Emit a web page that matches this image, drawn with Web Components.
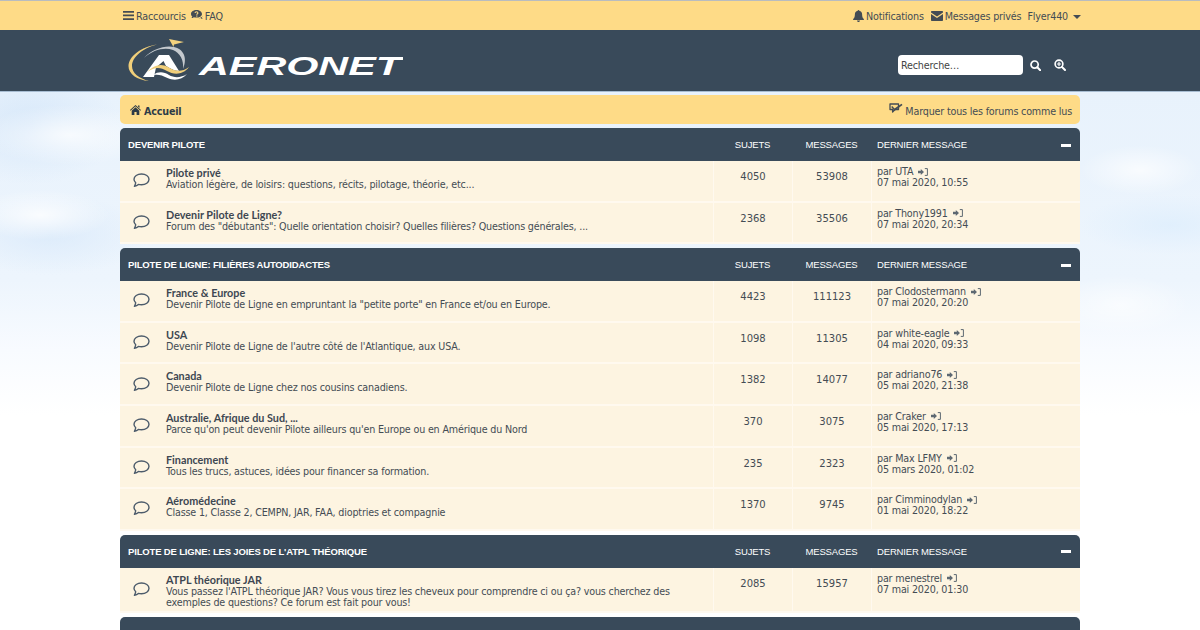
<!DOCTYPE html>
<html lang="fr">
<head>
<meta charset="utf-8">
<title>Aeronet</title>
<style>
  html, body { margin: 0; height: 630px; overflow: hidden; }
  body {
    font-family: "DejaVu Sans", sans-serif;
    color: #444c54;
    background:
      radial-gradient(ellipse 90px 30px at 70px 135px, rgba(255,255,255,.75), transparent),
      radial-gradient(ellipse 70px 25px at 40px 215px, rgba(255,255,255,.8), transparent),
      radial-gradient(ellipse 60px 25px at 1140px 170px, rgba(255,255,255,.7), transparent),
      radial-gradient(ellipse 70px 30px at 1120px 305px, rgba(255,255,255,.6), transparent),
      radial-gradient(ellipse 90px 60px at 30px 125px, rgba(205,226,248,.6), transparent),
      radial-gradient(ellipse 100px 40px at 50px 235px, rgba(215,232,250,.7), transparent),
      radial-gradient(ellipse 90px 30px at 1170px 225px, rgba(222,238,253,.8), transparent),
      linear-gradient(#e8f2fc 92px, #edf5fd 280px, #f8fbff 350px, #fff 415px);
  }
</style>
</head>
<body>
<aero-top></aero-top>
<aero-head></aero-head>
<aero-wrap>
  <aero-crumb></aero-crumb>
  <aero-cat title="DEVENIR PILOTE">
    <aero-row name="Pilote privé" desc="Aviation légère, de loisirs: questions, récits, pilotage, théorie, etc..." s="4050" m="53908" by="UTA" date="07 mai 2020, 10:55"></aero-row>
    <aero-row name="Devenir Pilote de Ligne?" desc="Forum des &quot;débutants&quot;: Quelle orientation choisir? Quelles filières? Questions générales, ..." s="2368" m="35506" by="Thony1991" date="07 mai 2020, 20:34"></aero-row>
  </aero-cat>
  <aero-cat title="PILOTE DE LIGNE: FILIÈRES AUTODIDACTES">
    <aero-row name="France &amp; Europe" desc="Devenir Pilote de Ligne en empruntant la &quot;petite porte&quot; en France et/ou en Europe." s="4423" m="111123" by="Clodostermann" date="07 mai 2020, 20:20"></aero-row>
    <aero-row name="USA" desc="Devenir Pilote de Ligne de l'autre côté de l'Atlantique, aux USA." s="1098" m="11305" by="white-eagle" date="04 mai 2020, 09:33"></aero-row>
    <aero-row name="Canada" desc="Devenir Pilote de Ligne chez nos cousins canadiens." s="1382" m="14077" by="adriano76" date="05 mai 2020, 21:38"></aero-row>
    <aero-row name="Australie, Afrique du Sud, ..." desc="Parce qu'on peut devenir Pilote ailleurs qu'en Europe ou en Amérique du Nord" s="370" m="3075" by="Craker" date="05 mai 2020, 17:13"></aero-row>
    <aero-row name="Financement" desc="Tous les trucs, astuces, idées pour financer sa formation." s="235" m="2323" by="Max LFMY" date="05 mars 2020, 01:02"></aero-row>
    <aero-row name="Aéromédecine" desc="Classe 1, Classe 2, CEMPN, JAR, FAA, dioptries et compagnie" s="1370" m="9745" by="Cimminodylan" date="01 mai 2020, 18:22"></aero-row>
  </aero-cat>
  <aero-cat title="PILOTE DE LIGNE: LES JOIES DE L'ATPL THÉORIQUE">
    <aero-row name="ATPL théorique JAR" desc="Vous passez l'ATPL théorique JAR? Vous vous tirez les cheveux pour comprendre ci ou ça? vous cherchez des exemples de questions? Ce forum est fait pour vous!" s="2085" m="15957" by="menestrel" date="07 mai 2020, 01:30"></aero-row>
  </aero-cat>
  <aero-cat></aero-cat>
</aero-wrap>

<script>
const ink = "#444c54";
const smallText = "font-size: 9.6px; letter-spacing: -.18px;";

const icons = {
  bars: `<svg width="11" height="9" viewBox="0 0 11 9"><path d="M0 0h11v1.700H0zM0 3.600h11v1.700H0zM0 7.200h11v1.700H0z" fill="currentColor"/></svg>`,
  faq: `<svg width="12" height="11" viewBox="0 0 12 11"><path d="M5.500 0C2.500 0 0 1.700 0 3.900c0 1 .5 1.900 1.300 2.600-.2.700-.6 1.200-1 1.600 1 0 1.900-.4 2.500-.9.800.3 1.700.4 2.700.4 3 0 5.500-1.600 5.500-3.700S8.500 0 5.500 0z" fill="currentColor"/><path d="M4 3c.1-.8.700-1.200 1.500-1.200S6.900 2.300 6.900 3c0 .9-1.100 1-1.100 1.800" fill="none" stroke="#fedb87" stroke-width="1.100"/><rect x="5.200" y="5.500" width="1.200" height="1.100" fill="#fedb87"/><path d="M7.500 8.200c.9.100 1.700 0 2.200-.3.500.5 1.200.9 2 1-.4-.5-.7-1-.8-1.500.4-.5.700-.9.900-1.500-1 1.400-2.500 2-4.300 2.300z" fill="currentColor"/></svg>`,
  bell: `<svg width="11" height="12" viewBox="0 0 11 12"><path d="M5.500 0c.5 0 .8.300.8.800 1.800.3 2.800 1.700 2.800 3.500 0 3 .7 3.700 1.800 4.900v.7H.1v-.7c1.100-1.200 1.800-1.900 1.800-4.900 0-1.800 1-3.200 2.800-3.500 0-.5.300-.8.800-.8zM4 10.500h3c0 .9-.7 1.500-1.500 1.500S4 11.400 4 10.500z" fill="currentColor"/></svg>`,
  mail: `<svg width="12" height="10" viewBox="0 0 12 10"><path d="M1 0h10c.6 0 1 .4 1 1v.5L6 5.600 0 1.500V1c0-.6.400-1 1-1zM0 3l6 4.100L12 3v6c0 .6-.4 1-1 1H1c-.6 0-1-.4-1-1z" fill="currentColor"/></svg>`,
  home: `<svg width="11" height="10" viewBox="0 0 11 10"><path d="M5.500 0L11 5l-.6.700-4.900-4.400L.6 5.700 0 5zM8 .6h1.500v2.300L8 1.600zM5.500 2.300l3.800 3.400V10H6.600V7H4.400v3H1.700V5.700z" fill="currentColor"/></svg>`,
  check: `<svg width="14" height="13" viewBox="0 0 14 13"><path d="M1 1h8.500v5.500H6L3.600 9V6.500H1z" fill="none" stroke="currentColor" stroke-width="1.300" stroke-linejoin="round"/><path d="M3.200 3l2.300 2.500L12.500.8l1 1.100-8 6L2.200 4z" fill="currentColor"/></svg>`,
  search: `<svg width="11" height="11" viewBox="0 0 11 11"><circle cx="4.600" cy="4.600" r="3.600" fill="none" stroke="currentColor" stroke-width="1.700"/><path d="M7.300 7.300L10.200 10.200" stroke="currentColor" stroke-width="2" stroke-linecap="round"/></svg>`,
  adv: `<svg width="12" height="12" viewBox="0 0 12 12"><circle cx="5" cy="5" r="3.900" fill="none" stroke="currentColor" stroke-width="1.600"/><path d="M8 8l3 3" stroke="currentColor" stroke-width="2" stroke-linecap="round"/><path d="M5 2.800v4.400M2.800 5h4.400" stroke="currentColor" stroke-width="1.200"/></svg>`,
  bubble: `<svg width="17" height="15" viewBox="0 0 17 15"><path d="M8.500 1C4.300 1 1 3.300 1 6.300c0 1.400.7 2.500 1.700 3.400-.1 1.100-.7 2.300-1.300 3.600 1.500-.3 3-1 4-1.900 1 .3 2 .4 3.100.4 4.200 0 7.500-2.400 7.500-5.500S12.700 1 8.500 1z" fill="none" stroke="#4c5b6b" stroke-width="1.400" stroke-linejoin="round"/></svg>`,
  goto: `<svg width="10" height="8" viewBox="0 0 10 8"><path d="M0 2.800h2.800V.9L6 4 2.800 7.100V5.200H0z" fill="#5d6872"/><path d="M6.800 .6H9.400v6.800H6.800" fill="none" stroke="#5d6872" stroke-width="1"/></svg>`
};

class AeroTop extends HTMLElement {
  constructor() {
    super();
    this.attachShadow({ mode: "open" });
    this.shadowRoot.innerHTML = `
    <style>
      :host { display: block; height: 29px; background: #fedb87; border-top: 1px solid #b9bcbf; color: ${ink}; ${smallText} }
      .in { width: 960px; margin: 0 auto; height: 100%; display: flex; justify-content: space-between; align-items: center; padding: 2px 0 0 3px; box-sizing: border-box; }
      .side { display: flex; align-items: center; }
      .it { display: flex; align-items: center; gap: 2px; }
      svg { display: block; margin-top: -2px; }
      .caret { width: 0; height: 0; border: 4px solid transparent; border-top: 4.5px solid currentColor; border-bottom: 0; margin-left: 3px; }
    </style>
    <div class="in">
      <div class="side" style="gap:5px">
        <span class="it">${icons.bars}Raccourcis</span>
        <span class="it">${icons.faq}FAQ</span>
      </div>
      <div class="side" style="gap:6px;margin-right:-1px">
        <span class="it" style="margin-right:1px">${icons.bell}Notifications</span>
        <span class="it">${icons.mail}Messages privés</span>
        <span class="it">Flyer440<i class="caret"></i></span>
      </div>
    </div>`;
  }
}

class AeroHead extends HTMLElement {
  constructor() {
    super();
    this.attachShadow({ mode: "open" });
    this.shadowRoot.innerHTML = `
    <style>
      :host { display: block; background: #394a5a; border-bottom: 1px solid #a8bdd2; height: 61px; }
      .in { width: 960px; margin: 0 auto; height: 100%; display: flex; justify-content: space-between; align-items: center; }
      .logo { margin-left: 7px; display: block; }
      .tools { display: flex; align-items: center; color: #fff; margin: 9px 14px 0 0; }
      .field { width: 125px; height: 20px; background: #fff; border-radius: 4px; ${smallText} line-height: 21px; padding-left: 3px; box-sizing: border-box; color: #444; margin-right: 7px; }
      .tools svg { display: block; }
    </style>
    <div class="in">
      <svg class="logo" width="276" height="54" viewBox="0 0 276 54">
        <path d="M30 10.500C14 13 2 22 1.500 32 1.500 40 10 46 22 47 12 44.500 5 39 5 32 5 23 16 14 30 10.500z" fill="#f1cf7a"/>
        <path d="M17 24C25 15 38 11 47 13c9 2 14 10 9 22 1-9-3-16-10-19-9-3-20 0-29 8z" fill="#fff" opacity=".7"/>
        <path d="M42 5l15 3-10 2.500-.5 2.500-2-3.500z" fill="#f3d27e"/>
        <path d="M32 21h10l10 16c-5 0-9-3-13-5l-2.500-5-7.500 6.500L27 43H16z" fill="#fff"/>
        <path d="M20 38c7-7 14-9 21-5 6 4 13 6 21 0-6 8-15 8-22 4-7-4-12-4-20 1z" fill="#f1cf7a"/>
        <path d="M26 41c6-4 11-3 16 0 5 3 12 3 18-1-5 6-13 7-19.500 4-5.500-3-9.500-4-14.500-3z" fill="#fff"/>
        <text x="72" y="40.500" font-family="Liberation Sans, sans-serif" font-weight="700" font-style="italic" font-size="25" fill="#fff" textLength="202" lengthAdjust="spacingAndGlyphs">AERONET</text>
      </svg>
      <div class="tools">
        <div class="field">Recherche…</div>
        <span style="margin:1px 13px 0 0">${icons.search}</span>
        <span style="margin-top:-1px">${icons.adv}</span>
      </div>
    </div>`;
  }
}

class AeroWrap extends HTMLElement {
  constructor() {
    super();
    this.attachShadow({ mode: "open" });
    this.shadowRoot.innerHTML = `
    <style>
      :host { display: flex; flex-direction: column; gap: 4px; width: 960px; margin: 3px auto 0; }
    </style>
    <slot></slot>`;
  }
}

class AeroCrumb extends HTMLElement {
  constructor() {
    super();
    this.attachShadow({ mode: "open" });
    this.shadowRoot.innerHTML = `
    <style>
      :host { display: flex; justify-content: space-between; align-items: center; height: 29px; background: #fedb87; border-radius: 5px; padding: 3px 8px 0 10px; color: ${ink}; ${smallText} box-sizing: border-box; }
      .l { display: flex; align-items: center; gap: 3px; font-weight: 700; color: #2e3b47; }
      .r { display: flex; align-items: center; gap: 2px; }
      svg { display: block; margin-top: -3px; }
    </style>
    <span class="l">${icons.home}Accueil</span>
    <span class="r">${icons.check}Marquer tous les forums comme lus</span>`;
  }
}

class AeroCat extends HTMLElement {
  constructor() {
    super();
    this.attachShadow({ mode: "open" });
    const title = this.getAttribute("title") || "";
    const cols = title ? `<span class="c s">SUJETS</span><span class="c m">MESSAGES</span><span class="c d">DERNIER MESSAGE</span><i class="minus"></i>` : "";
    this.shadowRoot.innerHTML = `
    <style>
      :host { display: block; }
      .bar { position: relative; display: flex; align-items: center; height: 33px; box-sizing: border-box; background: #394a5a; border-radius: 5px 5px 0 0; color: #fff; font: 9.5px "Liberation Sans", sans-serif; letter-spacing: -.16px; }
      .t { flex: 1; padding-left: 8px; font-weight: 700; min-width: 0; }
      .c { text-align: center; }
      .s, .m { width: 79px; }
      .d { width: 209px; padding-left: 6px; box-sizing: border-box; text-align: left; }
      .minus { position: absolute; right: 9px; top: 15.500px; width: 10px; height: 3px; background: #fff; }
      .body { display: flex; flex-direction: column; }
    </style>
    <div class="bar"><span class="t">${title}</span>${cols}</div>
    <div class="body"><slot></slot></div>`;
  }
}

class AeroRow extends HTMLElement {
  constructor() {
    super();
    this.attachShadow({ mode: "open" });
    const a = n => this.getAttribute(n) || "";
    this.shadowRoot.innerHTML = `
    <style>
      :host { display: grid; grid-template-columns: 593px 79px 79px 209px; background: #fdf4e1; border-bottom: 2px solid #fff9ef; color: ${ink}; ${smallText} line-height: 11.5px; min-height: 39.6px; }
      .main { display: flex; align-items: center; min-width: 0; padding-right: 40px; }
      .ic { width: 43px; display: flex; justify-content: center; flex: none; margin: 0 3px 0 0; }
      .txt { align-self: flex-start; padding: 6px 0 2px; }
      .name { font: 700 10.8px/12px Lato, sans-serif; letter-spacing: 0; color: #3d4751; }
      .num { border-left: 1px solid #fff9ef; text-align: center; font-size: 10px; letter-spacing: 0; padding-top: 10px; }
      .last { border-left: 1px solid #fff9ef; padding: 5px 0 0 5px; line-height: 11px; }
      .by { display: flex; align-items: center; gap: 5px; }
      svg { display: block; }
    </style>
    <div class="main">
      <div class="ic">${icons.bubble}</div>
      <div class="txt"><div class="name">${a("name")}</div><div class="desc">${a("desc")}</div></div>
    </div>
    <div class="num">${a("s")}</div>
    <div class="num">${a("m")}</div>
    <div class="last"><div class="by">par ${a("by")} ${icons.goto}</div><div>${a("date")}</div></div>`;
  }
}

customElements.define("aero-top", AeroTop);
customElements.define("aero-head", AeroHead);
customElements.define("aero-wrap", AeroWrap);
customElements.define("aero-crumb", AeroCrumb);
customElements.define("aero-cat", AeroCat);
customElements.define("aero-row", AeroRow);
</script>
</body>
</html>
